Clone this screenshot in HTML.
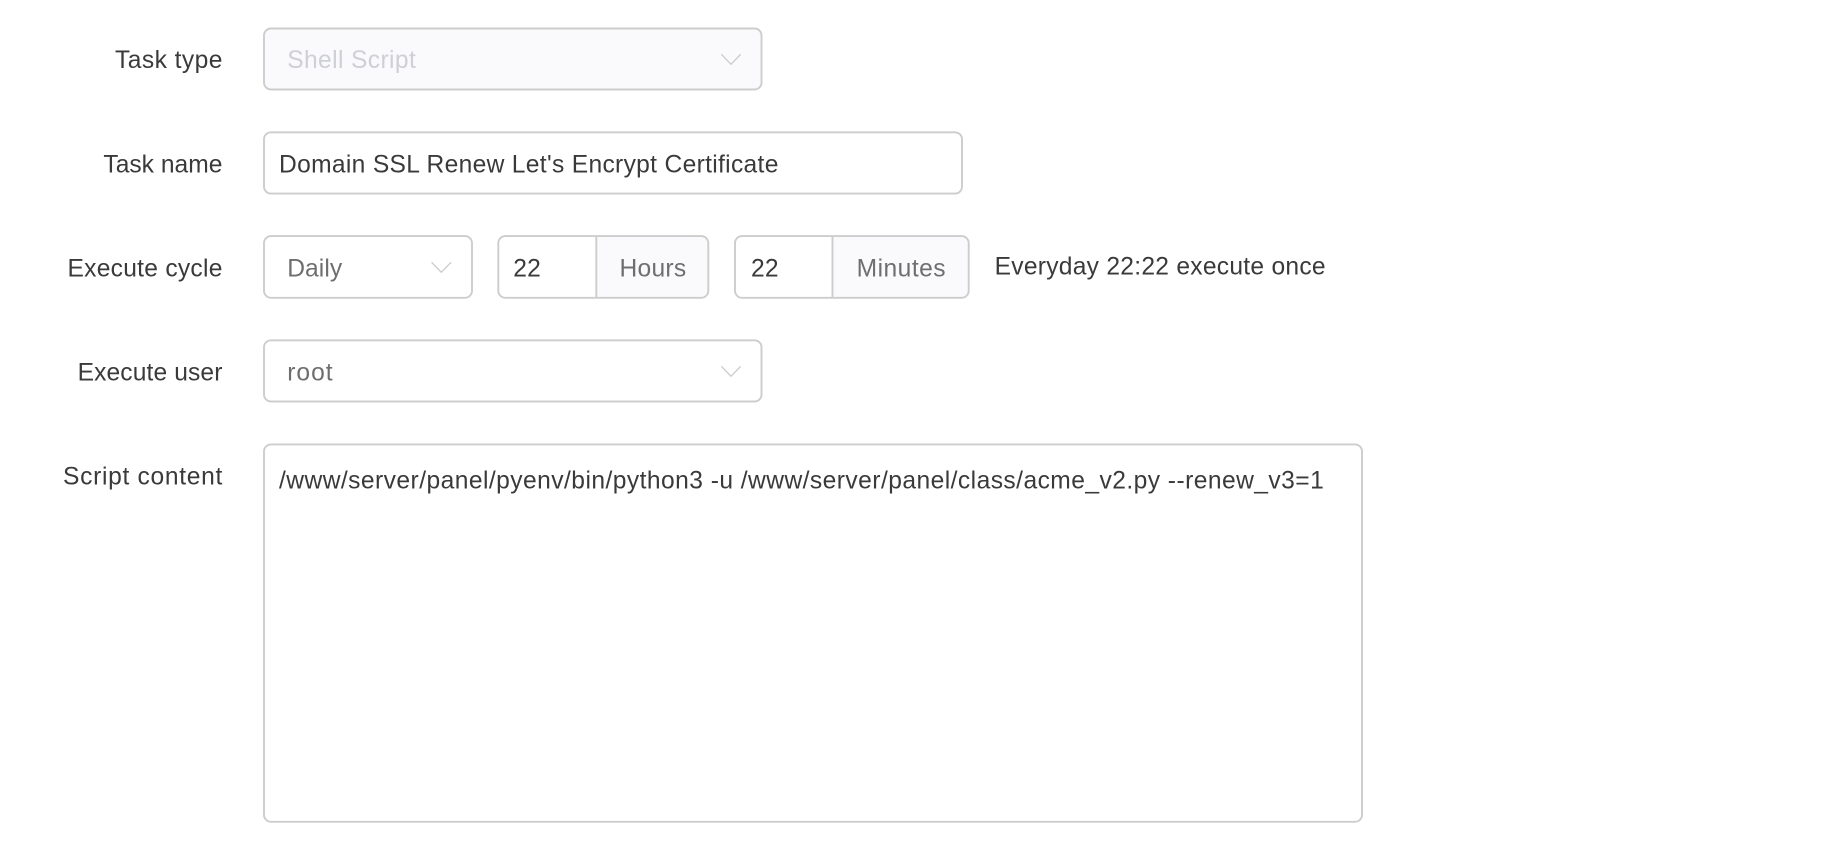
<!DOCTYPE html>
<html lang="en">
<head>
<meta charset="utf-8">
<title>Task form</title>
<style>
html,body{margin:0;padding:0;background:#fff;width:1836px;height:862px;overflow:hidden}
svg{display:block}
text{font-family:"Liberation Sans",sans-serif;font-size:24.6px}
.l{fill:#3a3a3a}
.v{fill:#3a3a3a}
.s{fill:#6e6e6e}
.d{fill:#cfd0d4}
.b{fill:#fff;stroke:#cdcdcd;stroke-width:1.9}
.c{fill:none;stroke:#c8c8c8;stroke-width:1.2}
</style>
</head>
<body>
<svg width="1836" height="862" viewBox="0 0 1836 862" xmlns="http://www.w3.org/2000/svg">
<rect width="1836" height="862" fill="#fff"/>

<text class="l" x="115" y="68.1" textLength="107.4" lengthAdjust="spacing">Task type</text>
<rect class="b" style="fill:#fafafc" x="264" y="28.5" width="497.5" height="61" rx="7"/>
<text class="d" x="287.2" y="68.1" textLength="128.6" lengthAdjust="spacing">Shell Script</text>
<path class="c" d="M721.3 54.3L731 64.3L740.7 54.3"/>

<text class="l" x="103.4" y="172.3" textLength="119" lengthAdjust="spacing">Task name</text>
<rect class="b" x="264" y="132.3" width="698" height="61.3" rx="7"/>
<text class="v" x="279" y="172.3" textLength="499.4" lengthAdjust="spacing">Domain SSL Renew Let's Encrypt Certificate</text>

<text class="l" x="67.5" y="276.3" textLength="154.9" lengthAdjust="spacing">Execute cycle</text>
<rect class="b" x="264" y="236.1" width="208" height="61.7" rx="7"/>
<text class="s" x="287.2" y="276.3" textLength="55" lengthAdjust="spacing">Daily</text>
<path class="c" d="M431.6 262.3L441.3 272.3L451 262.3"/>

<path d="M596.3 236.1H701.3a7 7 0 0 1 7 7V290.8a7 7 0 0 1 -7 7H596.3Z" fill="#fafafc"/>
<rect x="498.3" y="236.1" width="210" height="61.7" rx="7" fill="none" stroke="#cdcdcd" stroke-width="1.9"/>
<path d="M596.3 236.1V297.8" stroke="#cdcdcd" stroke-width="1.9"/>
<text class="v" x="513.3" y="276.3" textLength="27.5" lengthAdjust="spacing">22</text>
<text class="s" x="619.5" y="276.3" textLength="66.7" lengthAdjust="spacing">Hours</text>

<path d="M832.5 236.1H961.7a7 7 0 0 1 7 7V290.8a7 7 0 0 1 -7 7H832.5Z" fill="#fafafc"/>
<rect x="735" y="236.1" width="233.7" height="61.7" rx="7" fill="none" stroke="#cdcdcd" stroke-width="1.9"/>
<path d="M832.5 236.1V297.8" stroke="#cdcdcd" stroke-width="1.9"/>
<text class="v" x="751" y="276.3" textLength="27.5" lengthAdjust="spacing">22</text>
<text class="s" x="856.6" y="276.3" textLength="89" lengthAdjust="spacing">Minutes</text>

<text class="v" x="994.6" y="274.3" textLength="331" lengthAdjust="spacing">Everyday 22:22 execute once</text>

<text class="l" x="77.6" y="380.3" textLength="144.8" lengthAdjust="spacing">Execute user</text>
<rect class="b" x="264" y="340.3" width="497.5" height="61.2" rx="7"/>
<text class="s" x="287.2" y="380.3" textLength="45.4" lengthAdjust="spacing">root</text>
<path class="c" d="M721.3 366.3L731 376.3L740.7 366.3"/>

<text class="l" x="63" y="484.3" textLength="159.4" lengthAdjust="spacing">Script content</text>
<rect class="b" x="264" y="444.4" width="1098" height="377.4" rx="7"/>
<text class="v" x="279" y="488.7" textLength="1044.8" lengthAdjust="spacing">/www/server/panel/pyenv/bin/python3 -u /www/server/panel/class/acme_v2.py --renew_v3=1</text>
</svg>
</body>
</html>
